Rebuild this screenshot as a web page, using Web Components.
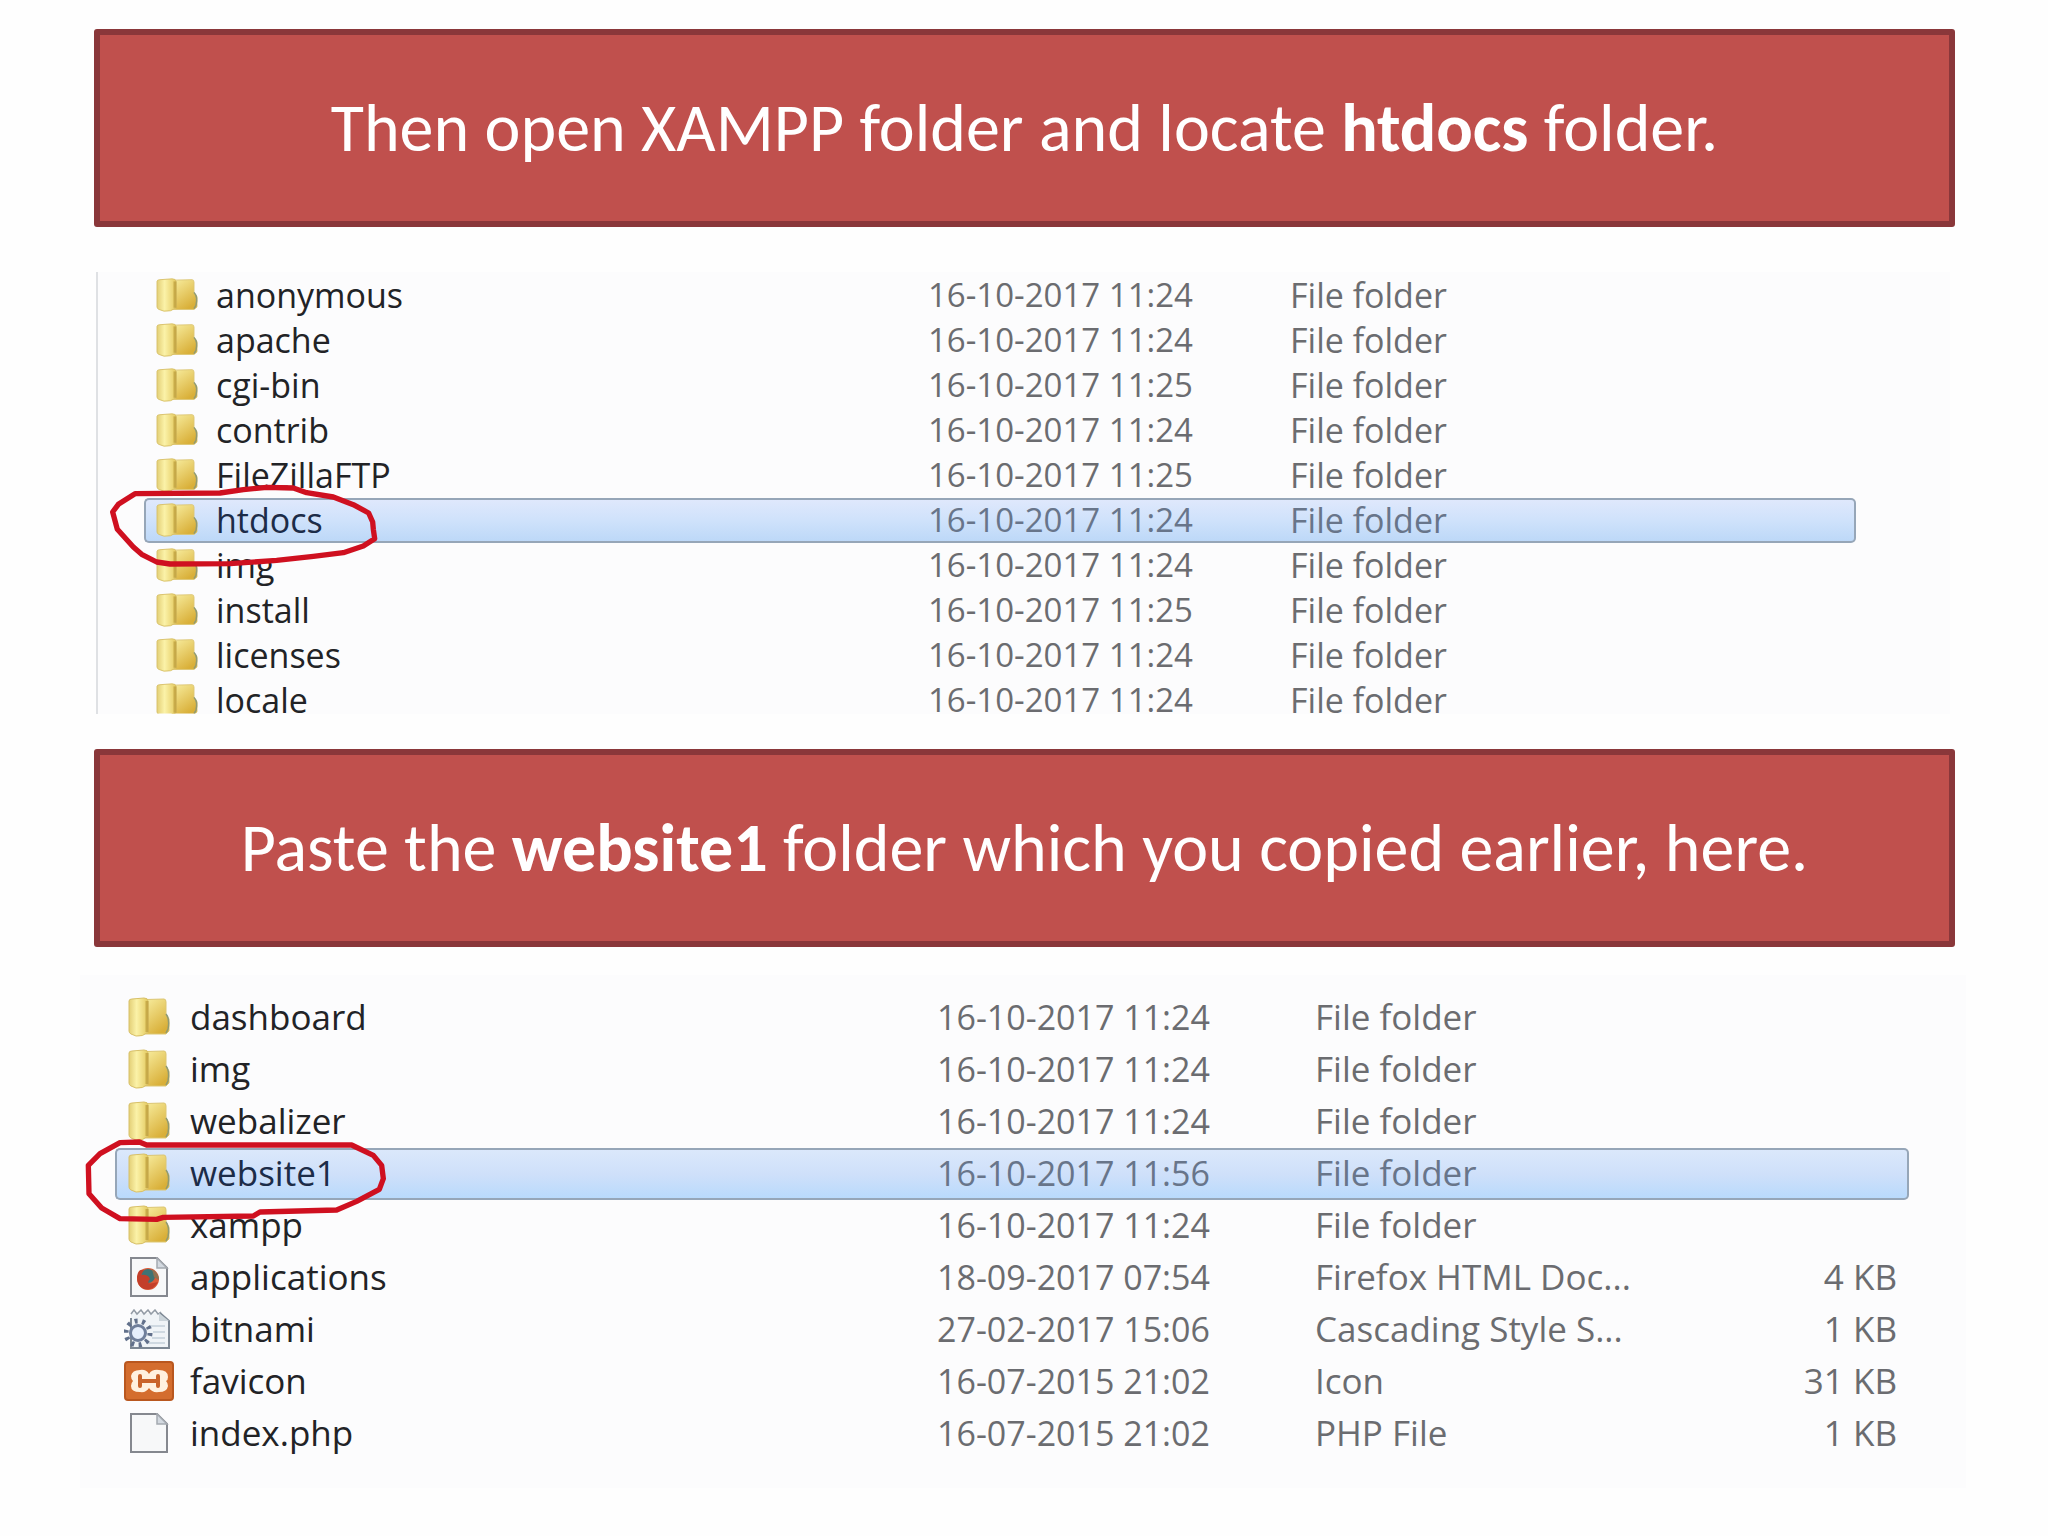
<!DOCTYPE html>
<html lang="en">
<head>
<meta charset="utf-8">
<title>Copying website1 into htdocs</title>
<style>
  body { margin: 0; background: #fefefe; }
</style>
</head>
<body>
<tutorial-slide>
  <step-banner>Then open XAMPP folder and locate <b>htdocs</b> folder.</step-banner>
  <file-table class="first" label="XAMPP folder" ring="htdocs">
    <file-entry name="anonymous" modified="16-10-2017 11:24" type="File folder" icon="folder"></file-entry>
    <file-entry name="apache" modified="16-10-2017 11:24" type="File folder" icon="folder"></file-entry>
    <file-entry name="cgi-bin" modified="16-10-2017 11:25" type="File folder" icon="folder"></file-entry>
    <file-entry name="contrib" modified="16-10-2017 11:24" type="File folder" icon="folder"></file-entry>
    <file-entry name="FileZillaFTP" modified="16-10-2017 11:25" type="File folder" icon="folder"></file-entry>
    <file-entry name="htdocs" modified="16-10-2017 11:24" type="File folder" icon="folder" selected></file-entry>
    <file-entry name="img" modified="16-10-2017 11:24" type="File folder" icon="folder"></file-entry>
    <file-entry name="install" modified="16-10-2017 11:25" type="File folder" icon="folder"></file-entry>
    <file-entry name="licenses" modified="16-10-2017 11:24" type="File folder" icon="folder"></file-entry>
    <file-entry name="locale" modified="16-10-2017 11:24" type="File folder" icon="folder"></file-entry>
  </file-table>
  <step-banner>Paste the <b>website1</b> folder which you copied earlier, here.</step-banner>
  <file-table class="second" label="htdocs folder" ring="website1">
    <file-entry name="dashboard" modified="16-10-2017 11:24" type="File folder" icon="folder"></file-entry>
    <file-entry name="img" modified="16-10-2017 11:24" type="File folder" icon="folder"></file-entry>
    <file-entry name="webalizer" modified="16-10-2017 11:24" type="File folder" icon="folder"></file-entry>
    <file-entry name="website1" modified="16-10-2017 11:56" type="File folder" icon="folder" selected></file-entry>
    <file-entry name="xampp" modified="16-10-2017 11:24" type="File folder" icon="folder"></file-entry>
    <file-entry name="applications" modified="18-09-2017 07:54" type="Firefox HTML Doc..." size="4 KB" icon="firefox"></file-entry>
    <file-entry name="bitnami" modified="27-02-2017 15:06" type="Cascading Style S..." size="1 KB" icon="css"></file-entry>
    <file-entry name="favicon" modified="16-07-2015 21:02" type="Icon" size="31 KB" icon="xampp"></file-entry>
    <file-entry name="index.php" modified="16-07-2015 21:02" type="PHP File" size="1 KB" icon="blank"></file-entry>
  </file-table>
</tutorial-slide>

<script>
class TutorialSlide extends HTMLElement {
  constructor() {
    super();
    this.attachShadow({ mode: 'open' }).innerHTML = `
      <style>
        :host { display: block; padding: 29px 93px 48px 94px; }
        ::slotted(file-table.first) {
          --row: 45px; --name-text: 34px; --text: 33px; --line: 28px; --name-pad: 8px; --icon-h: 34px; --gap: 14px;
          --name-col: 784px; --date-col: 362px; --last-cut: 3px;
          --tint: linear-gradient(#dfe8fc, #cfe2fb 50%, #bdd8f8);
          margin: 45px 5px 35px 2px; padding: 1px 94px 0 46px;
          max-height: 441px; border-left: 2px solid #dfe1e4;
        }
        ::slotted(file-table.second) {
          --row: 52px; --name-text: 35px; --text: 34px; --line: 38px; --name-pad: 9px; --icon-h: 40px; --gap: 16px;
          --name-col: 822px; --date-col: 378px; --last-cut: 0px;
          --tint: linear-gradient(#dbe8fb, #cfe0fa 50%, #b9dafc);
          margin: 28px -11px 0 -14px; padding: 17px 57px 28px 35px;
        }
      </style>
      <slot></slot>`;
  }
}

class StepBanner extends HTMLElement {
  constructor() {
    super();
    this.attachShadow({ mode: 'open' }).innerHTML = `
      <style>
        :host { display: block; box-sizing: border-box; border: 6px solid #8a373a; border-radius: 3px;
          background: #c0504d; color: #fff; padding: 55px 24px; text-align: center; }
        h2 { margin: 0; font: 400 68px/76px Carlito, Lato, sans-serif; }
        ::slotted(b) { font-weight: 700; }
      </style>
      <h2><slot></slot></h2>`;
  }
}

const PAGE = `<path d="M7 1H33L43 11V39H7Z" fill="#f7f8f9" stroke="#85888f" stroke-width="2"/>
  <path d="M33 1V11H43Z" fill="#d3d9e0" stroke="#a4a9b0" stroke-width="1.5"/>`;
const ICONS = {
  folder: `<defs>
      <linearGradient id="a" x2="1"><stop offset="0" stop-color="#e3cf76"/><stop offset=".4" stop-color="#fbf2a8"/><stop offset="1" stop-color="#e4ca60"/></linearGradient>
      <linearGradient id="b" x2=".6" y2="1"><stop offset="0" stop-color="#f8eea0"/><stop offset="1" stop-color="#d9af38"/></linearGradient>
    </defs>
    <path d="M22 2.500 40 2Q42 2 42 5V17L45 22V34L42 37H20Z" fill="url(#b)" stroke="#dcc673"/>
    <path d="M42 17Q46 22 44 32L42 36" fill="none" stroke="#8f9a74" stroke-width="1.500"/>
    <path d="M5 4Q5 2 8 2L20 1Q24 1 24 4V35Q19 40 12 39L7 37Q5 36 5 34Z" fill="url(#a)" stroke="#d8c068"/>
    <path d="M23 4V35" stroke="#b99939" stroke-width="3" opacity=".65"/>`,
  firefox: PAGE + `<circle cx="24" cy="22" r="11" fill="#da5a37"/>
    <circle cx="24" cy="19" r="7" fill="#3f7374"/>
    <path d="M13 20Q14 11 20 13L17 18Q24 17 26 22Q20 29 34 25Q29 34 20 32Q13 29 13 20Z" fill="#c33f2a"/>
    <path d="M28 12Q35 16 35 23L30 20Z" fill="#8e7252"/>`,
  css: `<path d="M7 4H35L45 12V39H7Z" fill="#f0f4f7"/>
    <path d="M7 9V39H45V12L36 4" fill="none" stroke="#7d8894" stroke-width="2"/>
    <path d="M7 5 10 1 13 5 17 1 20 5 24 1 27 5 31 1 34 5 37 3" fill="none" stroke="#929ba5" stroke-width="1.500"/>
    <path d="M35 4V12H45Z" fill="#cbd4da"/>
    <path d="M27 17H41M29 23H41M28 29H41M22 34H41" stroke="#c3d0da" stroke-width="1.500"/>
    <circle cx="14" cy="24" r="12" fill="none" stroke="#61708b" stroke-width="5" stroke-dasharray="3 4.540"/>
    <circle cx="14" cy="24" r="7.500" fill="#e6effc" stroke="#6f7f9b" stroke-width="3"/>`,
  xampp: `<rect x="1" y="1" width="48" height="38" rx="3" fill="#d46d2e" stroke="#b9571f" stroke-width="2"/>
    <path d="M16 9Q22 8 25 13Q28 8 35 9Q44 9 44 16Q44 19 42 20Q44 22 44 25Q43 31 35 31Q28 32 25 27Q22 32 16 31Q7 31 7 25Q7 22 9 20Q7 18 7 15Q8 9 16 9Z" fill="#fff1df"/>
    <path d="M16 15V25M34 15V25M16 20H34" fill="none" stroke="#c9642b" stroke-width="4" stroke-linecap="round"/>`,
  blank: PAGE
};

class FileIcon extends HTMLElement {
  connectedCallback() {
    const root = this.attachShadow({ mode: 'open' });
    root.innerHTML = `
      <style>
        :host { display: block; flex: none; width: 50px; height: var(--icon-h); }
        svg { display: block; width: 100%; height: 100%; }
      </style>
      <svg viewBox="0 0 50 40" preserveAspectRatio="none" aria-hidden="true">${ICONS[this.getAttribute('kind')]}</svg>`;
  }
}

// Hand-drawn loops around the highlighted entries.
const RINGS = {
  htdocs: { box: '75 120 825 270', w: 275, h: 90, x: -41, y: -18,
    d: 'M165 155 L420 153 490 143 560 136 640 138 680 152 760 165 820 188 866 213 878 240 880 262 884 290 850 312 790 332 700 343 590 355 450 365 270 366 230 360 185 337 160 315 112 262 98 210 115 187Z' },
  website1: { box: '0 510 930 279', w: 310, h: 93, x: -37, y: -18,
    d: 'M120 542 L178 540 200 549 815 549 880 580 905 610 910 650 898 682 830 718 770 744 540 750 520 762 250 766 230 772 120 770 65 738 27 695 25 610 60 575Z' }
};

class MarkerRing extends HTMLElement {
  connectedCallback() {
    const r = RINGS[this.getAttribute('shape')];
    this.attachShadow({ mode: 'open' }).innerHTML = `
      <style>
        :host { position: absolute; z-index: 2; left: ${r.x}px; top: ${r.y}px; pointer-events: none; }
        svg { display: block; }
      </style>
      <svg width="${r.w}" height="${r.h}" viewBox="${r.box}" aria-hidden="true">
        <path d="${r.d}" fill="none" stroke="#cf1020" stroke-width="16" stroke-linejoin="round"/>
      </svg>`;
  }
}

class FileTable extends HTMLElement {
  connectedCallback() {
    const ring = this.getAttribute('ring');
    const rows = [...this.querySelectorAll('file-entry')].map(e => {
      const v = n => e.getAttribute(n) || '';
      const on = e.hasAttribute('selected');
      return `<tr${on ? ' class="selected"' : ''}>
        <td class="name"><div><file-icon kind="${v('icon')}"></file-icon><span>${v('name')}</span></div>${on ? `<marker-ring shape="${ring}"></marker-ring>` : ''}</td>
        <td>${v('modified')}</td><td class="type">${v('type')}</td><td class="size">${v('size')}</td></tr>`;
    }).join('');
    this.attachShadow({ mode: 'open' }).innerHTML = `
      <style>
        :host { display: block; box-sizing: content-box; background: #fcfcfd;
          font: var(--text)/1 "Open Sans", "Noto Sans", sans-serif; color: #6b6c70; }
        table { width: 100%; table-layout: fixed; border-collapse: separate; border-spacing: 0; }
        .c-name { width: var(--name-col); } .c-date { width: var(--date-col); }
        td { box-sizing: border-box; height: var(--row); padding: 0 0 2px; white-space: nowrap;
          vertical-align: middle; line-height: var(--line); border: 0 solid #96a6b8; }
        .name, .type, .size { font-size: var(--name-text); }
        .name { position: relative; color: #222326; padding-left: var(--name-pad); }
        .name div { display: flex; align-items: center; gap: var(--gap); height: 38px; }
        .size { text-align: right; padding-right: 12px; }
        .selected td { background: var(--tint); border-width: 2px 0; color: #68758a; }
        .selected .name { color: #1c2c48; border-left-width: 2px; border-radius: 5px 0 0 5px;
          padding-left: calc(var(--name-pad) - 2px); }
        .selected td:last-child { border-right-width: 2px; border-radius: 0 5px 5px 0; }
        tr:last-child file-icon { clip-path: inset(0 0 var(--last-cut)); }
      </style>
      <table aria-label="${this.getAttribute('label')}">
        <colgroup><col class="c-name"><col class="c-date"><col><col></colgroup>
        <tbody>${rows}</tbody>
      </table>`;
  }
}

customElements.define('tutorial-slide', TutorialSlide);
customElements.define('step-banner', StepBanner);
customElements.define('file-icon', FileIcon);
customElements.define('marker-ring', MarkerRing);
customElements.define('file-table', FileTable);
</script>
</body>
</html>
